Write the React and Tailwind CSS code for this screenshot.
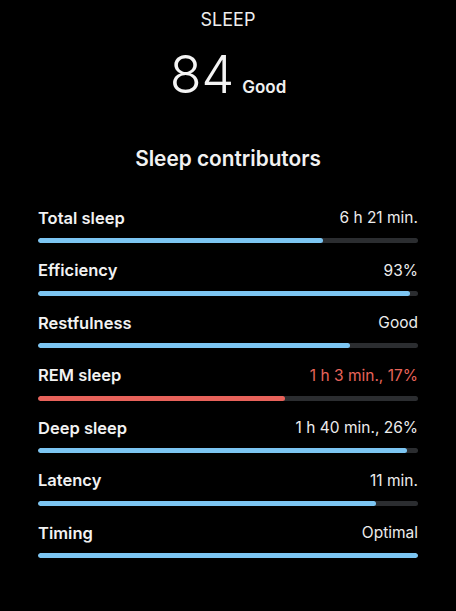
const contributors = [
  { label: 'Total sleep', value: '6 h 21 min.', pct: 75 },
  { label: 'Efficiency', value: '93%', pct: 98 },
  { label: 'Restfulness', value: 'Good', pct: 82 },
  { label: 'REM sleep', value: '1 h 3 min., 17%', pct: 65, warn: true },
  { label: 'Deep sleep', value: '1 h 40 min., 26%', pct: 97 },
  { label: 'Latency', value: '11 min.', pct: 89 },
  { label: 'Timing', value: 'Optimal', pct: 100 },
]

function Contributor({ label, value, pct, warn }) {
  return (
    <div className="h-[52.5px]">
      <div className="flex justify-between items-center h-6">
        <span className="text-[16.5px] font-semibold text-[#f2f2f2]">{label}</span>
        <span className={`text-[15.5px] ${warn ? 'text-[#e8645a]' : 'text-[#ececec]'}`}>{value}</span>
      </div>
      <div className="mt-[8px] h-[5px] rounded-full bg-[#2b2d30] overflow-hidden">
        <div
          className={`h-full rounded-full ${warn ? 'bg-[#e8625a]' : 'bg-[#7cc5f2]'}`}
          style={{ width: `${pct}%` }}
        />
      </div>
    </div>
  )
}

export default function App() {
  return (
    <div className="min-h-[611px] w-[456px] bg-black text-white" style={{ fontFamily: 'Inter, "Noto Sans", sans-serif' }}>
      {/* Encabezado */}
      <div className="pt-[6px] text-center text-[18px] leading-7 text-[#eeeeee]">SLEEP</div>
      <div className="mt-[11px] flex justify-center items-baseline">
        <span className="text-[52px] leading-[60px] font-light text-[#f4f4f4]">84</span>
        <span className="ml-[8px] text-[17px] font-semibold text-[#f0f0f0]">Good</span>
      </div>

      <h2 className="mt-[40px] text-center text-[20.8px] leading-7 font-semibold text-[#f2f2f2]">Sleep contributors</h2>

      {/* Lista */}
      <div className="mt-[33px] px-[38px]">
        {contributors.map(c => (
          <Contributor key={c.label} {...c} />
        ))}
      </div>
    </div>
  )
}
